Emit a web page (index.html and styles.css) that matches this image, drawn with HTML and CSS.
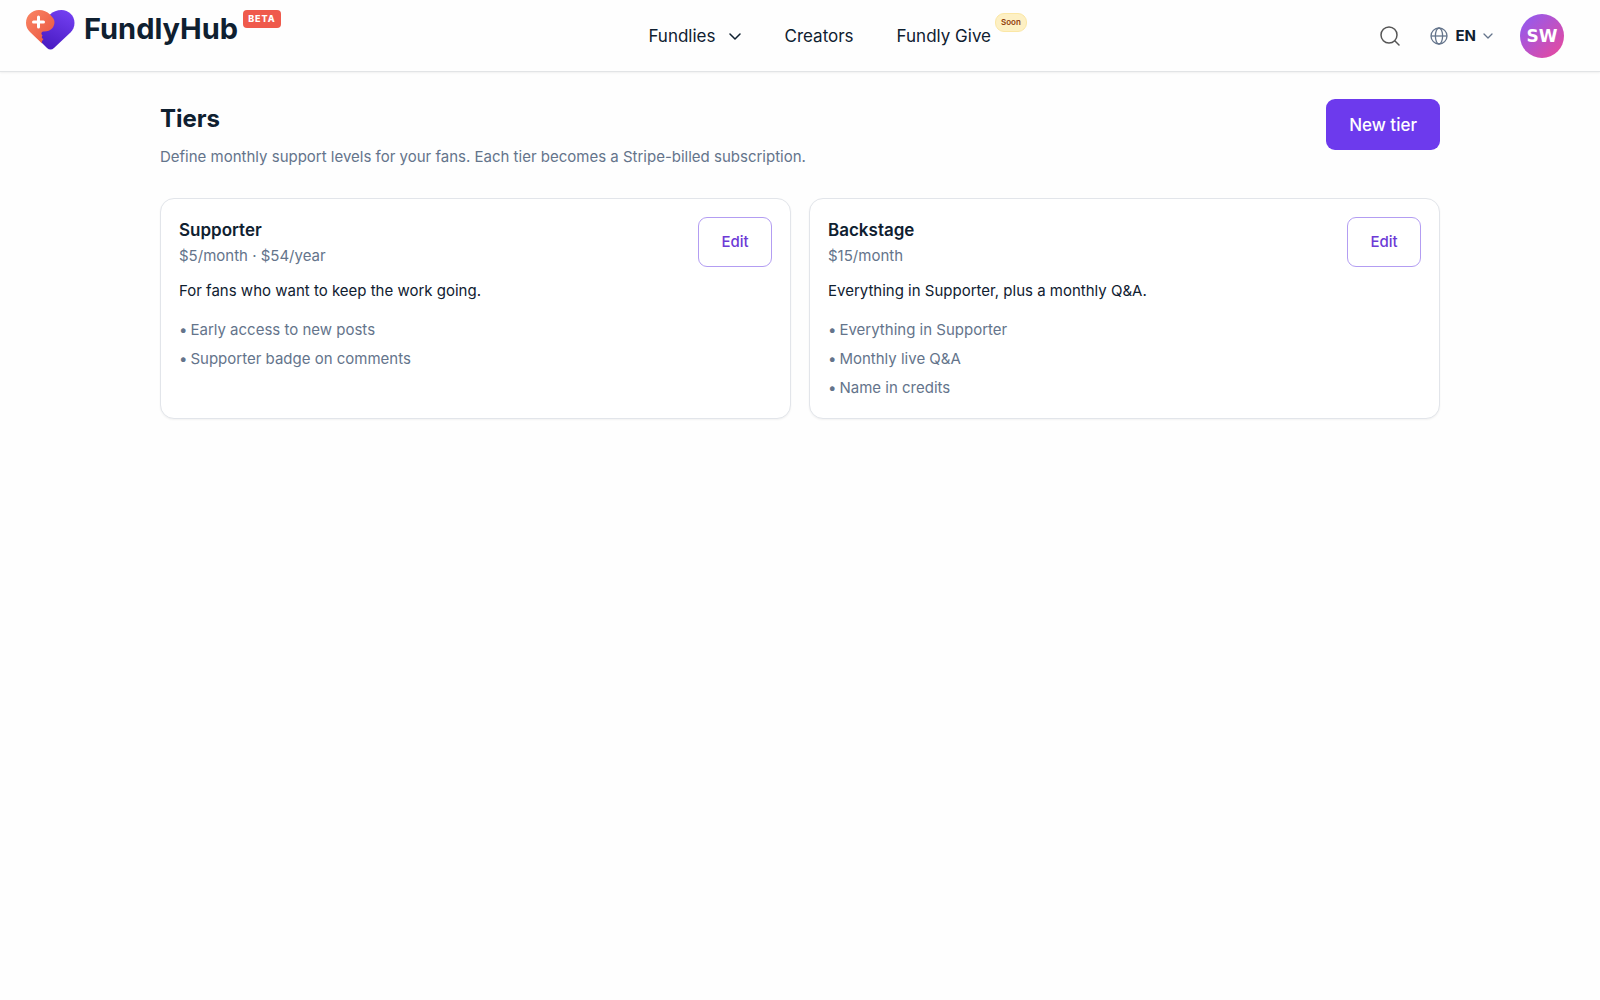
FILE: index.html
```html
<!DOCTYPE html>
<html lang="en">
<head>
  <meta charset="UTF-8">
  <meta name="viewport" content="width=device-width, initial-scale=1.0">
  <title>Tiers - FundlyHub</title>
  <link rel="stylesheet" href="styles.css">
</head>
<body>

  <header class="site-header">
    <a class="brand" href="#">
      <svg class="brand-mark" width="50" height="42" viewBox="0 0 50 42" aria-hidden="true">
        <defs>
          <linearGradient id="violet" x1="0.8" y1="0" x2="0.4" y2="1">
            <stop offset="0" stop-color="#7440f2"/>
            <stop offset="1" stop-color="#4a1cc4"/>
          </linearGradient>
          <linearGradient id="coral" x1="0" y1="0" x2="1" y2="1">
            <stop offset="0" stop-color="#fa8664"/>
            <stop offset="1" stop-color="#e9533f"/>
          </linearGradient>
        </defs>
        <path fill="url(#violet)" d="M25 4.500C28 1.500 32 0 36.500 0C43.500 0 49.500 5.500 49.500 13C49.500 17 48 20 45.500 22.500L29 38Q25.500 41 22 38L16 32V20Z"/>
        <path fill="url(#coral)" d="M17 33.500L5 22C2.500 19.500 1 16.500 1 13C1 5.500 7 0 14 0C18.500 0 22 1.500 25 4.500L28 8C30.500 11 29.500 15.500 27.500 18C25.500 20.500 22.500 21.500 19 21.500C16.500 21.500 15.500 23.500 17.500 25.500C16 27.500 17 28.500 18.500 29C17 30.500 16.500 32 17 33.500Z"/>
        <path stroke="#fff" stroke-width="3" stroke-linecap="round" d="M13.500 7v10M8.500 12h10"/>
      </svg>
      <span class="brand-name">FundlyHub</span>
      <span class="beta">BETA</span>
    </a>

    <nav class="main-nav">
      <button class="nav-item" type="button">
        Fundlies
        <svg width="12" height="12" viewBox="0 0 12 12" fill="none" stroke="currentColor" stroke-width="1.5" stroke-linecap="round" stroke-linejoin="round"><path d="M1 4l5 5 5-5"/></svg>
      </button>
      <a class="nav-item" href="#">Creators</a>
      <a class="nav-item" href="#">Fundly Give<span class="soon">Soon</span></a>
    </nav>

    <div class="tools">
      <button class="icon-btn" type="button" aria-label="Search">
        <svg width="20" height="20" viewBox="0 0 20 20" fill="none" stroke="#555" stroke-width="1.500" stroke-linecap="round"><circle cx="9" cy="9" r="8"/><path d="M15 15l4 4"/></svg>
      </button>
      <button class="lang" type="button">
        <svg width="18" height="18" viewBox="0 0 18 18" fill="none" stroke="#64748b" stroke-width="1.300"><circle cx="9" cy="9" r="8"/><ellipse cx="9" cy="9" rx="3.600" ry="8"/><path d="M1 9h16"/></svg>
        EN
        <svg width="10" height="10" viewBox="0 0 10 10" fill="none" stroke="#64748b" stroke-width="1.300" stroke-linecap="round" stroke-linejoin="round"><path d="M1 3l4 4 4-4"/></svg>
      </button>
      <button class="avatar" type="button" aria-label="Account">SW</button>
    </div>
  </header>

  <main class="container">
    <div class="page-head">
      <div>
        <h1>Tiers</h1>
        <p class="subtitle">Define monthly support levels for your fans. Each tier becomes a Stripe-billed subscription.</p>
      </div>
      <button class="btn-primary" type="button">New tier</button>
    </div>

    <div class="tiers">
      <section class="card">
        <div class="card-head">
          <div>
            <h2>Supporter</h2>
            <p class="price">$5/month · $54/year</p>
          </div>
          <button class="btn-outline" type="button">Edit</button>
        </div>
        <p class="description">For fans who want to keep the work going.</p>
        <ul class="benefits">
          <li>Early access to new posts</li>
          <li>Supporter badge on comments</li>
        </ul>
      </section>

      <section class="card">
        <div class="card-head">
          <div>
            <h2>Backstage</h2>
            <p class="price">$15/month</p>
          </div>
          <button class="btn-outline" type="button">Edit</button>
        </div>
        <p class="description">Everything in Supporter, plus a monthly Q&amp;A.</p>
        <ul class="benefits">
          <li>Everything in Supporter</li>
          <li>Monthly live Q&amp;A</li>
          <li>Name in credits</li>
        </ul>
      </section>
    </div>
  </main>

</body>
</html>
```
FILE: styles.css
```css
* {
  box-sizing: border-box;
}

body {
  margin: 0;
  font-family: Inter, "Liberation Sans", sans-serif;
  font-size: 15px;
  line-height: 24px;
  color: #0f2030;
  background-color: #fefefe;
}

h1, h2, p, ul {
  margin: 0;
  padding: 0;
}

button {
  font: inherit;
  color: inherit;
  background: none;
  border: none;
  padding: 0;
  cursor: pointer;
}

a {
  color: inherit;
  text-decoration: none;
}

svg {
  display: block;
}

.site-header {
  display: flex;
  justify-content: space-between;
  align-items: center;
  height: 72px;
  padding: 0 36px 0 25px;
  border-bottom: 1px solid #e2e4e6;
  box-shadow: 0 1px 2px rgba(0, 0, 0, 0.06);
}

.brand {
  display: flex;
  align-items: flex-start;
  height: 52px;
}

.brand-name {
  margin-left: 9px;
  font-size: 29px;
  font-weight: 700;
  line-height: 38px;
}

.beta {
  margin-left: 5px;
  padding: 0 5px;
  border-radius: 4px;
  background-color: #ef5a4c;
  color: #fff;
  font-size: 9px;
  font-weight: 800;
  line-height: 18px;
  letter-spacing: 1px;
}

.main-nav {
  display: flex;
  align-items: center;
  gap: 43px;
  margin-left: 14px;
}

.nav-item {
  display: flex;
  align-items: center;
  gap: 14px;
  font-size: 17px;
}

.soon {
  align-self: flex-start;
  margin: -11px 0 0 -10px;
  padding: 0 5px;
  border: 1px solid #fbe7a5;
  border-radius: 9px;
  background-color: #fdf0c4;
  color: #92400e;
  font-size: 8px;
  font-weight: 600;
  line-height: 17px;
}

.tools {
  display: flex;
  align-items: center;
}

.icon-btn {
  margin-right: 30px;
}

.lang {
  display: flex;
  align-items: center;
  gap: 7px;
  margin-right: 27px;
  font-weight: 700;
}

.avatar {
  width: 44px;
  height: 44px;
  border-radius: 50%;
  background: linear-gradient(135deg, #8b5cf6, #ec4899);
  color: #fff;
  font-family: "DejaVu Sans", sans-serif;
  font-size: 17px;
  font-weight: 700;
}

.container {
  max-width: 1280px;
  margin: 0 auto;
  padding: 27px 0;
}

.page-head {
  display: flex;
  justify-content: space-between;
  align-items: flex-start;
  margin-bottom: 29px;
}

h1 {
  font-size: 24px;
  font-weight: 700;
  line-height: 40px;
}

.subtitle {
  margin-top: 6px;
  color: #64748b;
}

.btn-primary {
  height: 51px;
  padding: 0 23px;
  border-radius: 9px;
  background-color: #6d3aed;
  color: #fff;
  font-size: 17px;
  font-weight: 500;
}

.tiers {
  display: grid;
  grid-template-columns: 1fr 1fr;
  gap: 18px;
}

.card {
  padding: 18px;
  border: 1px solid #e2e5ea;
  border-radius: 14px;
  background-color: #fff;
  box-shadow: 0 1px 2px rgba(0, 0, 0, 0.05);
}

.card-head {
  display: flex;
  justify-content: space-between;
  align-items: flex-start;
}

h2 {
  font-size: 17px;
  font-weight: 600;
  line-height: 26px;
}

.price {
  line-height: 26px;
  color: #64748b;
}

.btn-outline {
  width: 74px;
  height: 50px;
  border: 1px solid #b39df2;
  border-radius: 9px;
  color: #6d3ad6;
  font-size: 15px;
  font-weight: 500;
}

.description {
  margin-top: 10px;
}

.benefits {
  display: grid;
  gap: 5px;
  margin-top: 15px;
  list-style: none;
  color: #64748b;
}

.benefits li::before {
  content: "•";
  margin-right: 3px;
}
```
